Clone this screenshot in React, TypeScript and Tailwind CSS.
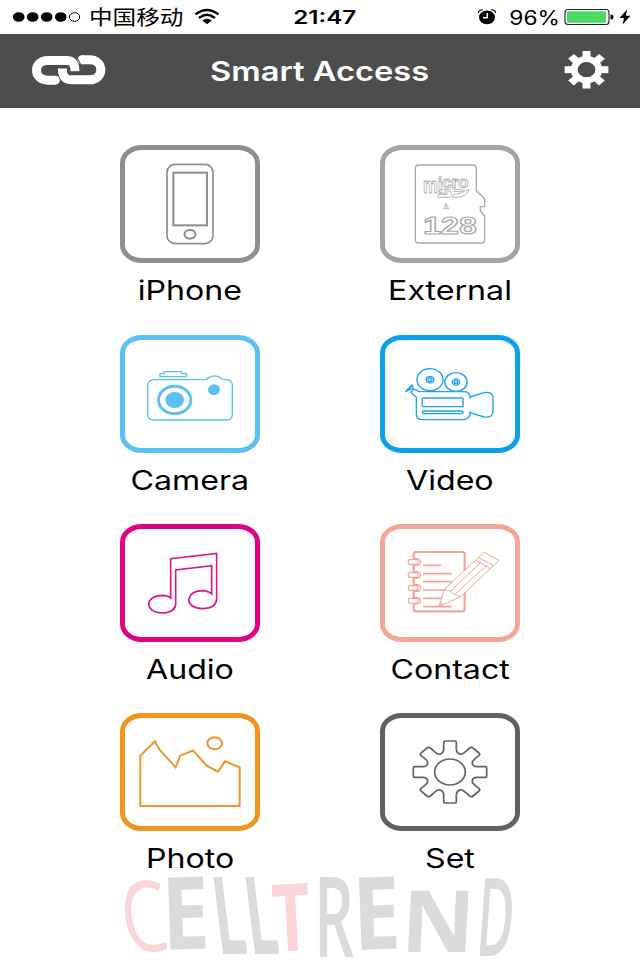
import React from 'react';

type Tile = {
  label: string;
  border: string;
  icon: React.ReactNode;
};

const PhoneIcon = () => (
  <svg viewBox="30 16 420 354" className="h-[118px] w-[140px] shrink-0" fill="none" stroke="#8c8c8c" strokeWidth="5">
    <rect x="171" y="74" width="138" height="238" rx="25" ry="23" />
    <rect x="190" y="99" width="101" height="158" strokeWidth="6" />
    <ellipse cx="240" cy="284" rx="16.5" ry="13" strokeWidth="6" />
  </svg>
);

const CardIcon = () => (
  <svg viewBox="30 16 420 354" className="h-[118px] w-[140px] shrink-0" fill="none" stroke="#a9a9a9" strokeWidth="4">
    <path d="M147 76H308Q319 76 319 86V153L344 177V201H331V215L344 228V300Q344 310 333 310H147Q136 310 136 300V86Q136 76 147 76Z" />
    <path d="M228 191L236 207H221ZM228 197V204" strokeWidth="2.5" />
    <g fontFamily="'Liberation Sans', Arial, sans-serif" fontWeight="700" strokeWidth="2.6">
      <text>
        <tspan x="159" y="159" fontSize="66" textLength="58" lengthAdjust="spacingAndGlyphs">mi</tspan>
        <tspan x="216" y="144" fontSize="50" textLength="80" lengthAdjust="spacingAndGlyphs">cro</tspan>
      </text>
      <text x="160" y="284" fontSize="74" strokeWidth="3.5" textLength="160" lengthAdjust="spacingAndGlyphs">128</text>
    </g>
    <path d="M242 149H224Q208 148 208 154Q208 160 217 160H232L230 164H204V173H231Q245 172 245 164Q245 154 231 154H222M254 149H270L285 154L297 149Q293 171 258 173H247L253 163H263Q276 162 280 156H252Z" strokeWidth="2.6" />
  </svg>
);

const CameraIcon = () => (
  <svg viewBox="30 14 420 354" className="h-[118px] w-[140px] shrink-0" fill="none" stroke="#5bc1ee" strokeWidth="4">
    <path d="M133 148H286Q292 146 296 142Q313 131 331 142Q336 148 343 148H349Q367 149 367 165V253Q366 269 349 269H133Q114 269 113 253V165Q114 149 133 148Z" />
    <path d="M150 139V130H163V124H215V130H230V139Z" />
    <ellipse cx="194" cy="209" rx="48.5" ry="41" strokeWidth="9" />
    <ellipse cx="194" cy="209" rx="28" ry="24" fill="#5bc1ee" stroke="none" />
    <ellipse cx="312" cy="178" rx="18" ry="16" fill="#5bc1ee" stroke="none" />
  </svg>
);

const VideoIcon = () => (
  <svg viewBox="30 14 420 354" className="h-[118px] w-[140px] shrink-0" fill="none" stroke="#20a5e6" strokeWidth="4.2" strokeLinejoin="round">
    <ellipse cx="180" cy="148" rx="39" ry="33" />
    <ellipse cx="180" cy="148" rx="11.5" ry="10" />
    <ellipse cx="180" cy="148" rx="6" ry="5" />
    <ellipse cx="258" cy="155" rx="33.5" ry="28" />
    <ellipse cx="258" cy="155" rx="11" ry="9.5" />
    <ellipse cx="258" cy="155" rx="5.5" ry="4.5" />
    <path d="M127 163L129 174L107 184Q114 174 127 163ZM127 166L113 181" strokeWidth="3.5" />
    <path d="M139 201L122 186L130 177Q139 176 146 184H281Q299 184 300 200L342 187Q369 184 369 202V243Q369 263 342 260L300 247Q300 267 279 268H157Q140 268 139 252ZM300 200V206M300 242V247" />
    <rect x="157" y="203" width="122" height="26" rx="3" />
    <rect x="157" y="242" width="122" height="8" rx="4" />
  </svg>
);

const AudioIcon = () => (
  <svg viewBox="30 17 420 354" className="h-[118px] w-[140px] shrink-0" fill="none" stroke="#d91b87" strokeWidth="5">
    <path d="M182 239V121L320 105V243Q317 270 277 271Q238 269 236 244Q240 219 275 217Q296 218 305 227V142L197 155V258Q195 282 157 284Q118 282 116 257Q119 233 157 231Q175 232 182 239Z" />
  </svg>
);

const rings = [131, 170, 209, 247];

const ContactIcon = () => (
  <svg viewBox="30 17 420 354" className="h-[118px] w-[140px] shrink-0" fill="none" stroke="#f5a595" strokeWidth="5">
    <rect x="131" y="101" width="153" height="178" rx="7" strokeWidth="6.5" />
    <path d="M159 141H213M159 166H245M159 190H245M159 215H225M159 240H216M159 265H245" />
    {rings.map((y) => (
      <g key={y} fill="#fff" strokeWidth="3.5">
        <path d={`M134 ${y - 10}H143Q151 ${y - 9} 151 ${y}Q151 ${y + 9} 143 ${y + 10}H134Z`} />
        <rect x="115" y={y - 7} width="29" height="14" rx="3" />
      </g>
    ))}
    <path d="M342 102L387 126L272 235L208 264L222 214Z" fill="#fff" strokeWidth="3" strokeLinejoin="round" />
    <path d="M222 214L242 218L249 226L272 235M326 118L371 142M317 126L361 151M333 132L242 218M350 141L257 226M208 264L212 253L218 259Z" strokeWidth="3" />
  </svg>
);

const PhotoIcon = () => (
  <svg viewBox="30 22 420 354" className="h-[118px] w-[140px] shrink-0" fill="none" stroke="#f0952b" strokeWidth="6">
    <path d="M91 301V150L135 107Q144 127 153 137L197 185L211 150L249 134L291 181L324 198L345 167L389 185V301Z" />
    <ellipse cx="314" cy="113" rx="22" ry="18" />
  </svg>
);

const quarters = ['scale(1 1)', 'scale(-1 1)', 'scale(1 -1)', 'scale(-1 -1)'];

const SetIcon = () => (
  <svg viewBox="30 22 420 354" className="h-[118px] w-[140px] shrink-0" fill="none" stroke="#666364" strokeWidth="5.2">
    <g transform="translate(240 199)">
      {quarters.map((q) => (
        <path
          key={q}
          transform={q}
          d="M0 -93H15Q19 -93 19 -89V-67C21 -53 33 -50 43 -58L59 -72Q64 -76 69 -72L87 -57Q91 -53 87 -49L73 -38C61 -28 68 -16 80 -16H106Q110 -16 110 -12V0"
        />
      ))}
      <ellipse rx="46" ry="39" />
    </g>
  </svg>
);

const tiles: Tile[] = [
  { label: 'iPhone', border: 'border-[#8f8f8f]', icon: <PhoneIcon /> },
  { label: 'External', border: 'border-[#a4a4a4]', icon: <CardIcon /> },
  { label: 'Camera', border: 'border-[#5bc1ee]', icon: <CameraIcon /> },
  { label: 'Video', border: 'border-[#0ba1e8]', icon: <VideoIcon /> },
  { label: 'Audio', border: 'border-[#e20083]', icon: <AudioIcon /> },
  { label: 'Contact', border: 'border-[#f5a797]', icon: <ContactIcon /> },
  { label: 'Photo', border: 'border-[#f0931f]', icon: <PhotoIcon /> },
  { label: 'Set', border: 'border-[#636061]', icon: <SetIcon /> },
];

const StatusBar = () => (
  <div className="grid h-[34px] grid-cols-[1fr_80px_1fr] items-center bg-white text-black">
    <div className="flex items-center pl-[12px]">
      <svg viewBox="0 0 70 12" className="h-3 w-[70px]">
        {[0, 1, 2, 3].map((i) => (
          <ellipse key={i} cx={6.7 + i * 14} cy="6" rx="5.8" ry="4.8" />
        ))}
        <ellipse cx="62.5" cy="6" rx="5.2" ry="4.3" fill="none" stroke="#000" strokeWidth="1" />
      </svg>
      <span className="ml-[7px] w-[94px] origin-left scale-x-[1.18] whitespace-nowrap font-['Noto_Sans_CJK_SC',sans-serif] text-[20px] leading-[34px]">
        中国移动
      </span>
      <svg viewBox="0 0 26 18" className="ml-[11px] h-[18px] w-[26px]" fill="none" stroke="#000" strokeWidth="2.4">
        <path d="M1.5 6.4Q13 -2.4 24.5 6.4M5 10Q13 3.6 21 10" />
        <path d="M8.3 12.6Q13 9 17.7 12.6L13 16.2Z" fill="#000" stroke="none" />
      </svg>
    </div>
    <div className="flex justify-center pt-[2px] pl-[9px]">
      <span className="scale-x-[1.27] font-[Inter,sans-serif] text-[19px] leading-[30px] font-semibold">21:47</span>
    </div>
    <div className="flex items-center justify-end pr-[9px]">
      <svg viewBox="0 0 20 18" className="mr-[1px] h-[18px] w-5">
        <ellipse cx="10" cy="9.3" rx="8" ry="6.9" />
        <path d="M1.4 5Q1.5 1.8 6 1.8M18.6 5Q18.5 1.8 14 1.8" fill="none" stroke="#000" strokeWidth="1.1" />
        <path d="M10.3 5V9.8H6" fill="none" stroke="#fff" strokeWidth="1.5" />
      </svg>
      <span className="ml-[13px] flex w-[48px] justify-center pt-[2px]">
        <span className="scale-x-[1.17] font-[Inter,sans-serif] text-[19.5px] leading-[30px]">96%</span>
      </span>
      <svg viewBox="0 0 50 18" className="ml-[5px] h-[18px] w-[50px]">
        <rect x="1" y="1.5" width="44" height="15" rx="3" fill="#fff" stroke="#222" strokeWidth="1.1" />
        <rect x="3" y="3.2" width="39" height="11.6" rx="1" fill="#4cd964" />
        <path d="M46.5 6.5Q49.5 6.5 49.5 9Q49.5 11.5 46.5 11.5Z" />
      </svg>
      <svg viewBox="0 0 12 16" className="ml-[5px] h-4 w-3">
        <path d="M8.2 .5L.5 9H5L3.6 15.5L11.5 6.7H6.8Z" />
      </svg>
    </div>
  </div>
);

const NavBar = () => (
  <header className="grid h-[74px] grid-cols-[1fr_auto_1fr] items-center border-b border-[#444] bg-[#4d4d4d] px-[31px]">
    <svg viewBox="93 163 225 95" className="h-[32px] w-[75px]" fill="none" stroke="#fff" strokeWidth="25">
      <path d="M166 238H144C98 238 98 179 144 179H160" strokeWidth="27" />
      <circle cx="166" cy="238" r="13.5" fill="#fff" stroke="none" />
      <path d="M226 237H216C192 237 187 225 187 200" stroke="#4d4d4d" strokeWidth="32" />
      <path d="M158 179H200C218 179 225 188 225 213" strokeWidth="27" />
      <path d="M246 177H268C314 177 314 237 268 237H216C194 237 187 225 187 203" strokeWidth="27" />
      <circle cx="246" cy="177" r="13.5" fill="#fff" stroke="none" />
      <path d="M205 200V213H240" stroke="#4d4d4d" strokeWidth="4" />
      <path d="M228 164Q236 178 241 188V213" stroke="#4d4d4d" strokeWidth="3" />
    </svg>
    <h1 className="scale-x-[1.21] pt-[3px] font-[Inter,sans-serif] text-[27px] font-semibold text-white">Smart Access</h1>
    <svg viewBox="-68 -60 136 120" className="h-10 w-[45px] justify-self-end" fill="none" stroke="#fff">
      <g transform="translate(0 -4) scale(1.16 1)">
        <circle r="32" strokeWidth="18" />
        {[0, 45, 90, 135, 180, 225, 270, 315].map((a) => (
          <path key={a} d="M0 -36V-57" strokeWidth="21" transform={`rotate(${a})`} />
        ))}
      </g>
    </svg>
  </header>
);

// each letter leans its own way: x/y of the baseline start, then skew and squeeze
const letters = [
  { char: 'C', size: 98, weight: 400, color: '#fcd5da', transform: 'translate(126 953) rotate(-2) skewX(6) scale(.74 1)' },
  { char: 'E', size: 101, weight: 700, color: '#dcdadc', transform: 'translate(163 951) rotate(-2) scale(.84 1)' },
  { char: 'L', size: 108, weight: 700, color: '#dcdadc', transform: 'translate(218 955) skewX(7) scale(.51 1)' },
  { char: 'L', size: 108, weight: 700, color: '#dcdadc', transform: 'translate(250 955) skewX(7) scale(.51 1)' },
  { char: 'T', size: 94, weight: 700, color: '#fcd5da', transform: 'translate(274 953) rotate(-3) scale(.7 1)' },
  { char: 'R', size: 112, weight: 600, color: '#dcdadc', transform: 'translate(314 958) scale(.56 1)' },
  { char: 'E', size: 101, weight: 700, color: '#dcdadc', transform: 'translate(354 951) rotate(-2) scale(.84 1)' },
  { char: 'N', size: 86, weight: 700, color: '#dcdadc', transform: 'translate(400 953) skewX(-3) scale(1.05 1)' },
  { char: 'D', size: 109, weight: 600, color: '#dcdadc', transform: 'translate(475 957) skewX(-4) scale(.46 1)' },
];

const Watermark = () => (
  <svg viewBox="120 870 400 90" className="mx-auto -mt-[6px] block h-[90px] w-[400px] shrink-0 overflow-visible" fontFamily="'Open Sans', sans-serif">
    {letters.map((l, i) => (
      <text key={i} transform={l.transform} fontSize={l.size} fontWeight={l.weight} fill={l.color}>
        {l.char}
      </text>
    ))}
  </svg>
);

export default function App() {
  return (
    <div className="flex h-[960px] w-[640px] flex-col overflow-hidden bg-white">
      <StatusBar />
      <NavBar />
      <main className="grid grid-cols-[140px_140px] justify-center gap-x-[120px] gap-y-[27.33px] pt-[37.4px]">
        {tiles.map((tile) => (
          <button key={tile.label} className="flex h-[162px] flex-col items-center">
            <span className={`flex h-[118px] w-[140px] shrink-0 items-center justify-center rounded-[22px/18px] border-[5px] ${tile.border}`}>
              {tile.icon}
            </span>
            <span className="mt-[11.1px] scale-x-[1.19] font-[Inter,sans-serif] text-[27px] leading-[34px] text-black">
              {tile.label}
            </span>
          </button>
        ))}
      </main>
      <Watermark />
    </div>
  );
}
